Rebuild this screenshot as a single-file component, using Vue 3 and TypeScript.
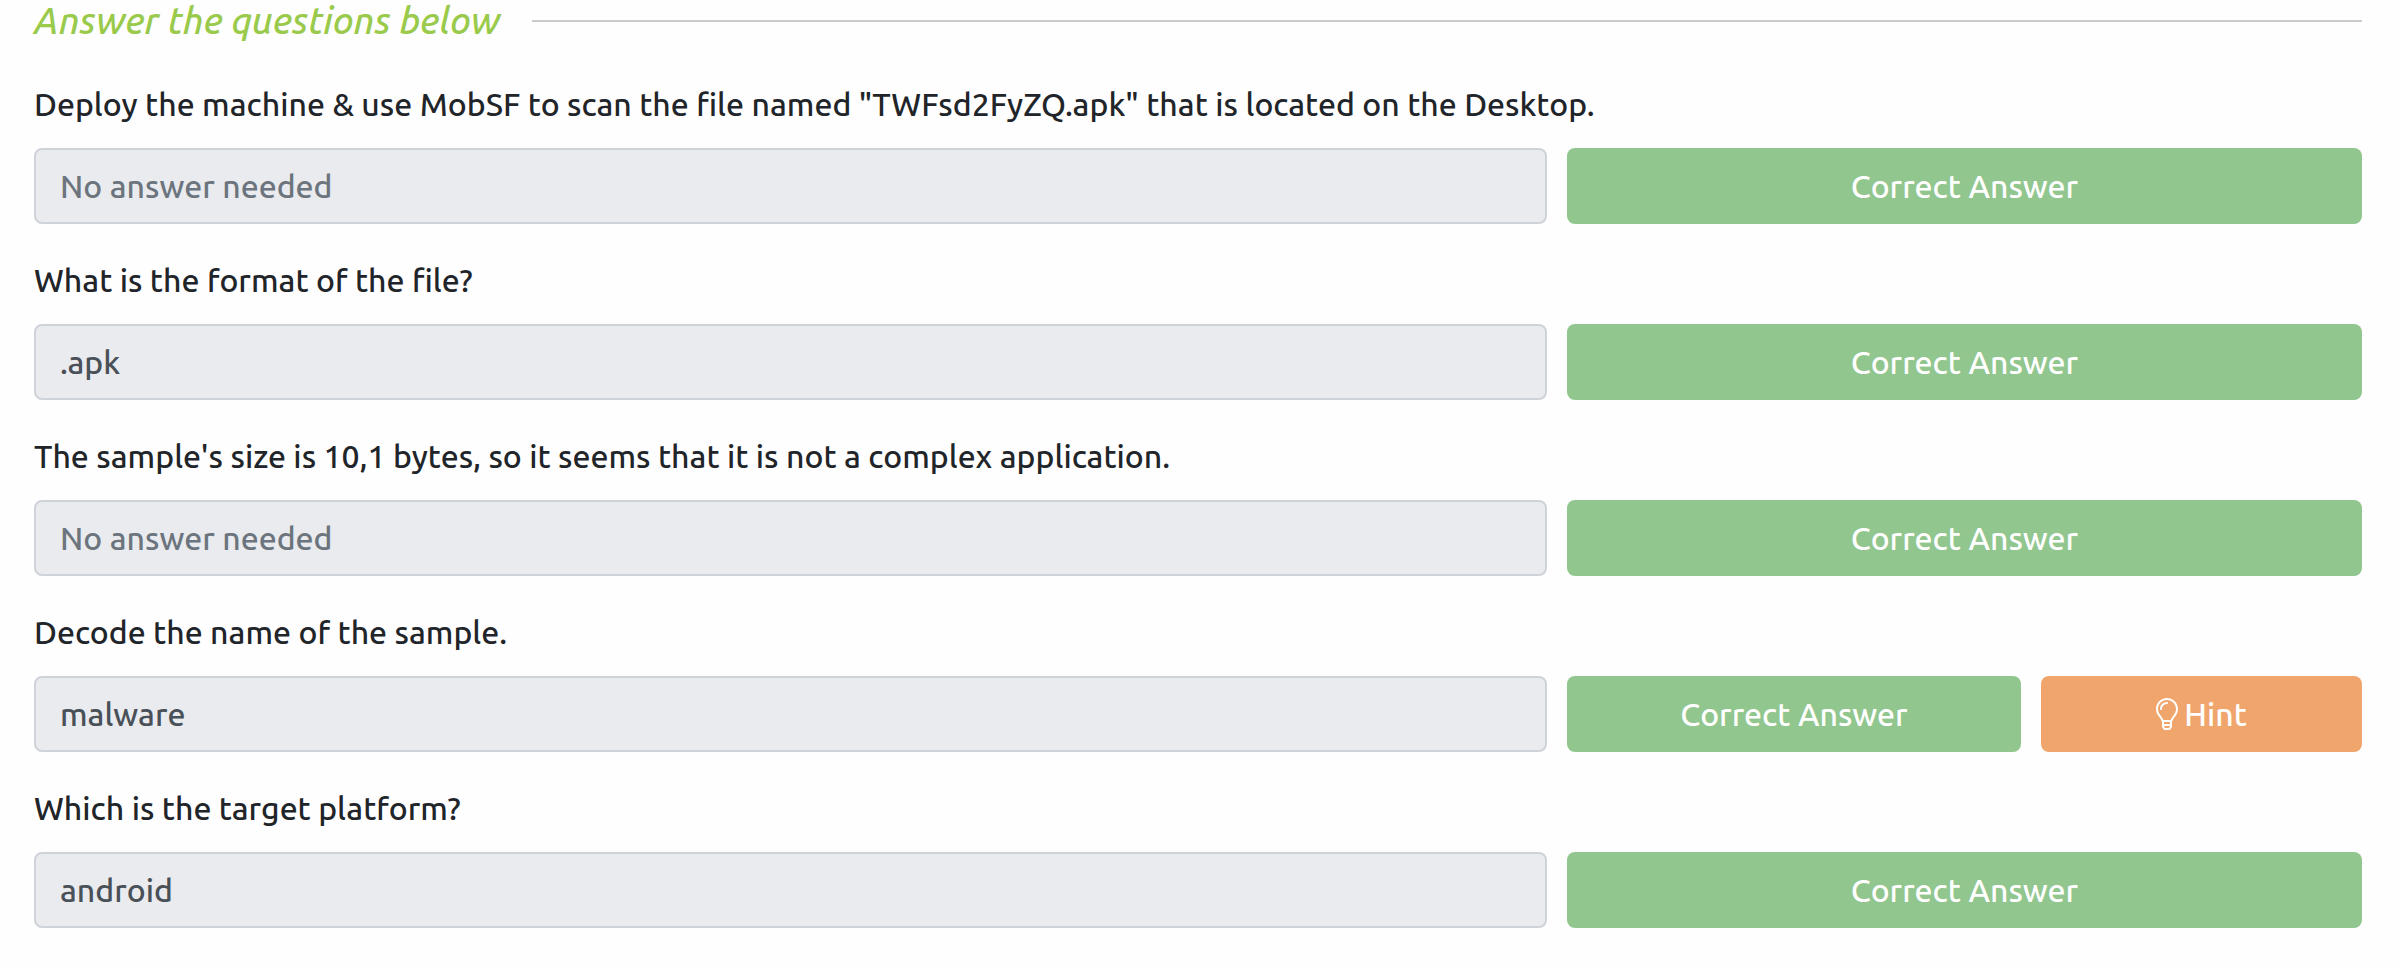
<script setup lang="ts">
interface Question {
  id: string
  prompt: string
  answer: string
  hint?: boolean
}

const questions: Question[] = [
  {
    id: 'deploy',
    prompt: 'Deploy the machine & use MobSF to scan the file named "TWFsd2FyZQ.apk" that is located on the Desktop.',
    answer: '',
  },
  { id: 'format', prompt: 'What is the format of the file?', answer: '.apk' },
  {
    id: 'size',
    prompt: "The sample's size is 10,1 bytes, so it seems that it is not a complex application.",
    answer: '',
  },
  { id: 'decode', prompt: 'Decode the name of the sample.', answer: 'malware', hint: true },
  { id: 'platform', prompt: 'Which is the target platform?', answer: 'android' },
]
</script>

<template>
  <main class="task">
    <header class="heading">
      <h2 class="title">Answer the questions below</h2>
      <hr class="rule" />
    </header>

    <form class="questions" @submit.prevent>
      <section v-for="q in questions" :key="q.id" class="question">
        <label class="prompt" :for="q.id">{{ q.prompt }}</label>
        <div class="row">
          <input
            :id="q.id"
            class="answer"
            type="text"
            :value="q.answer"
            placeholder="No answer needed"
            disabled
          />
          <div class="actions">
            <button class="btn correct" type="button">Correct Answer</button>
            <button v-if="q.hint" class="btn hint" type="button">
              <svg class="bulb" viewBox="0 0 352 512" aria-hidden="true">
                <path d="M176 0C73.05 0-.12 83.54 0 176.24c.06 44.28 16.5 84.67 43.56 115.54C69.21 321.03 93.85 368.68 96 384l.06 75.18c0 3.15.94 6.22 2.68 8.84l24.51 36.84c2.97 4.46 7.97 7.14 13.32 7.14h78.85c5.36 0 10.36-2.68 13.32-7.14l24.51-36.84c1.74-2.62 2.67-5.7 2.68-8.84L256 384c2.26-15.72 26.99-63.19 52.44-92.22C335.55 260.85 352 220.37 352 176 352 78.8 273.2 0 176 0zm47.94 454.31L206.85 480h-61.71l-17.09-25.69-.01-6.31h95.9v6.31zm.04-38.31h-95.97l-.07-32h96.08l-.04 32zm60.4-145.32c-13.99 15.96-36.33 48.1-50.58 81.31H118.21c-14.26-33.22-36.59-65.35-50.58-81.31C44.5 244.3 32.13 210.85 32.05 176 31.87 99.01 92.43 32 176 32c79.4 0 144 64.6 144 144 0 34.85-12.65 68.48-35.62 94.68zM176 64c-61.75 0-112 50.25-112 112 0 8.84 7.16 16 16 16s16-7.16 16-16c0-44.11 35.88-80 80-80 8.84 0 16-7.16 16-16s-7.16-16-16-16z" />
              </svg>
              <span>Hint</span>
            </button>
          </div>
        </div>
      </section>
    </form>
  </main>
</template>

<style>
body {
  margin: 0;
  background: #fefefe;
}
</style>

<style scoped>
.task {
  padding: 0 40px 36px 34px;
  font-family: Ubuntu, 'Noto Sans', 'Open Sans', sans-serif;
  font-size: 32px;
  font-weight: 500;
  color: #212529;
}

.heading {
  display: flex;
  align-items: center;
  gap: 32px;
  height: 42px;
}

.title {
  margin: 0;
  font-size: 37px;
  line-height: 42px;
  font-weight: 500;
  font-style: italic;
  color: #9aca4b;
  white-space: nowrap;
}

.rule {
  flex: 1;
  height: 2px;
  margin: 0;
  border: 0;
  background: #cacbcb;
}

.questions {
  display: flex;
  flex-direction: column;
  gap: 32px;
  margin-top: 38px;
}

.question {
  display: flex;
  flex-direction: column;
  gap: 20px;
}

.prompt {
  line-height: 48px;
}

.row {
  display: grid;
  grid-template-columns: minmax(0, 1513fr) minmax(0, 795fr);
  gap: 20px;
}

.answer {
  min-width: 0;
  height: 76px;
  box-sizing: border-box;
  padding: 0 24px;
  border: 2px solid #ced3d9;
  border-radius: 8px;
  background: #eaebef;
  color: #495057;
  font: inherit;
}

.answer::placeholder {
  color: #6c757d;
  opacity: 1;
}

.actions {
  min-width: 0;
  display: flex;
  gap: 20px;
}

.btn {
  display: flex;
  align-items: center;
  justify-content: center;
  gap: 6px;
  min-width: 0;
  height: 76px;
  padding: 0;
  border: 0;
  border-radius: 8px;
  color: #ffffff;
  font: inherit;
  white-space: nowrap;
}

.correct {
  flex: 454 1 0;
  background: #91c68f;
}

.hint {
  flex: 321 1 0;
  background: #f0a56d;
}

.bulb {
  width: 22px;
  height: 32px;
  fill: currentColor;
}
</style>
